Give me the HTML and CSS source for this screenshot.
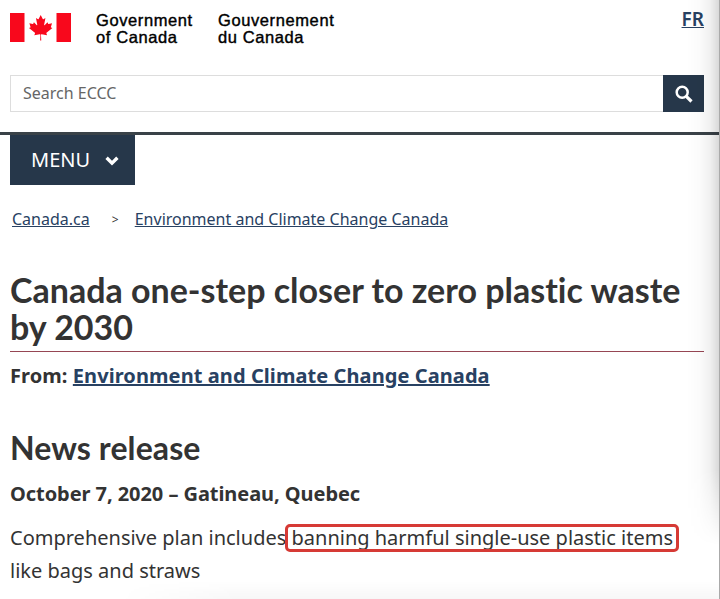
FILE: index.html
```
<!DOCTYPE html>
<html lang="en">
<head>
    <meta charset="UTF-8">
    <title>Canada one-step closer to zero plastic waste by 2030</title>
    <link rel="stylesheet" href="styles.css">
</head>
<body>
<div class="page">
    <header>
        <div class="brand">
            <svg class="flag" width="61" height="29" viewBox="0 0 61 29">
                <path fill="#f8081c" d="M0 0h14.5v29H0zM46.5 0H61v29H46.5z"/>
                <path fill="#f8081c" transform="translate(30.7 14.6) scale(.0063)" d="m-90 2030 45-863a95 95 0 0 0-111-98l-859 151 116-320a65 65 0 0 0-20-73l-941-762 212-99a65 65 0 0 0 34-79l-186-572 542 115a65 65 0 0 0 73-38l105-247 423 454a65 65 0 0 0 111-57l-204-1052 327 189a65 65 0 0 0 91-27l332-652 332 652a65 65 0 0 0 91 27l327-189-204 1052a65 65 0 0 0 111 57l423-454 105 247a65 65 0 0 0 73 38l542-115-186 572a65 65 0 0 0 34 79l212 99-941 762a65 65 0 0 0-20 73l116 320-859-151a95 95 0 0 0-111 98l45 863z"/>
            </svg>
            <div class="wordmark">Government<br>of Canada</div>
            <div class="wordmark french">Gouvernement<br>du Canada</div>
            <a class="lang" href="#">FR</a>
        </div>
        <form class="search">
            <input class="search_input" type="text" placeholder="Search ECCC">
            <button class="search_button" type="button" aria-label="Search">
                <svg width="18" height="18" viewBox="0 0 18 18" fill="none" stroke="#fff">
                    <circle cx="7.2" cy="7.2" r="5.5" stroke-width="2.5"/>
                    <path d="M11.3 11.3l5.2 5.2" stroke-width="3.2"/>
                </svg>
            </button>
        </form>
    </header>
    <nav>
        <button class="menu" type="button">MENU
            <svg width="14" height="10" viewBox="0 0 14 10" fill="none" stroke="#fff" stroke-width="3.4">
                <path d="M1.6 1.8L7 7.1l5.4-5.3"/>
            </svg>
        </button>
    </nav>
    <div class="breadcrumb">
        <a href="#">Canada.ca</a>
        <span class="arrow">&gt;</span>
        <a href="#">Environment and Climate Change Canada</a>
    </div>
    <main>
        <h1>Canada one-step closer to zero plastic waste<br>by 2030</h1>
        <p class="from">From: <a href="#">Environment and Climate Change Canada</a></p>
        <h2>News release</h2>
        <p class="date">October 7, 2020 – Gatineau, Quebec</p>
        <p class="text">Comprehensive plan includes <span class="marked">banning harmful single-use plastic items</span><br>like bags and straws</p>
    </main>
</div>
</body>
</html>
```

FILE: styles.css
```
*{
    box-sizing: border-box;
}
body{
    margin: 0;
    background-color: #fff;
    color: #333;
    font-family: "Noto Sans", sans-serif;
    font-size: 20px;
}
a{
    color: #284162;
}
.page{
    position: relative;
    height: 599px;
    overflow: hidden;
    border-right: 1px solid #aaa;
}
/* shadow on the right and bottom edges */
.page::before, .page::after{
    content: "";
    position: absolute;
    right: 0;
    bottom: 0;
    pointer-events: none;
}
.page::before{
    top: 0;
    width: 32px;
    background: linear-gradient(to left, rgba(0,0,0,.15), rgba(0,0,0,.06) 9px, rgba(0,0,0,.015) 20px, transparent);
    mask-image: linear-gradient(#000 470px, transparent 545px);
}
.page::after{
    width: 600px;
    height: 18px;
    background: linear-gradient(to top, rgba(0,0,0,.03), transparent);
    mask-image: linear-gradient(to right, transparent, #000 120px);
}
header{
    height: 135px;
    padding: 0 15px 0 10px;
    border-bottom: 3px solid #3a4248;
}
.brand{
    display: flex;
    height: 75px;
}
.flag{
    margin-top: 13px;
}
.wordmark{
    width: 121px;
    margin: 12px 0 0 25px;
    color: #000;
    font: 16.5px/17px "Liberation Sans", sans-serif;
    letter-spacing: .6px;
    -webkit-text-stroke: .4px #000;
}
.french{
    margin-left: 1px;
}
.lang{
    margin: 7px 0 0 auto;
    font-size: 19px;
    font-weight: 600;
    line-height: 24px;
}
.search{
    display: flex;
    height: 37px;
}
.search_input{
    flex: 1;
    padding: 0 12px 2px;
    border: 1px solid #ddd;
    border-right: 0;
    font: 16px "Noto Sans", sans-serif;
}
.search_input::placeholder{
    color: #666;
}
.search_button{
    display: flex;
    align-items: center;
    justify-content: center;
    width: 41px;
    padding: 0;
    border: 0;
    background-color: #26374a;
}
nav{
    height: 50px;
    padding-left: 10px;
}
.menu{
    display: flex;
    align-items: center;
    gap: 15px;
    width: 125px;
    height: 50px;
    padding: 0 0 1px 21px;
    border: 0;
    background-color: #26374a;
    color: #fff;
    font: 20px "Noto Sans", sans-serif;
}
.menu svg{
    margin-top: 2px;
}
.breadcrumb{
    display: flex;
    align-items: center;
    height: 24px;
    margin-top: 22px;
    padding-left: 12px;
    font-size: 16px;
}
.arrow{
    width: 45px;
    padding-left: 22px;
    font-size: 12px;
}
main{
    padding: 0 15px 0 10px;
}
h1, h2{
    margin: 0;
    font-family: Lato, sans-serif;
    font-weight: 700;
    font-variant-ligatures: none;
}
h1{
    height: 81px;
    margin-top: 40px;
    border-bottom: 1px solid #964653;
    font-size: 34px;
    line-height: 37px;
    white-space: nowrap;
}
h2{
    margin-top: 38px;
    font-size: 32px;
    line-height: 36px;
    letter-spacing: .1px;
}
p{
    margin: 0;
    line-height: 33px;
    white-space: nowrap;
}
.from{
    margin-top: 7px;
    font-weight: 700;
    letter-spacing: .08px;
}
.date{
    margin-top: 11px;
    font-weight: 700;
    letter-spacing: -.06px;
}
.text{
    margin-top: 11px;
}
.marked{
    position: relative;
}
.marked::after{
    content: "";
    position: absolute;
    inset: 0 -6px -1px -7px;
    border: 3px solid #d63a35;
    border-radius: 5px;
}
```
